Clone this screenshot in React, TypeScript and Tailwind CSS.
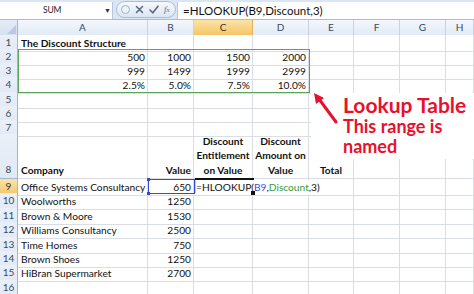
import React from "react";

const FONT = { fontFamily: "Lato, 'Open Sans', sans-serif" };

type Row = {
  n: number;
  h: string;
  end?: boolean;
  cells: (React.ReactNode | null)[];
};

const R = ({ children }: { children: React.ReactNode }) => (
  <div className="w-full text-right pr-[2px]">{children}</div>
);
const L = ({ children }: { children: React.ReactNode }) => (
  <div className="w-full pl-[3px] whitespace-nowrap">{children}</div>
);
const C = ({ children }: { children: React.ReactNode }) => (
  <div className="w-full text-center font-bold leading-[14.5px]">{children}</div>
);

const ROWS: Row[] = [
  { n: 1, h: "h-[14px]", cells: [<L><b>The Discount Structure</b></L>] },
  { n: 2, h: "h-[14px]", cells: [<R>500</R>, <R>1000</R>, <R>1500</R>, <R>2000</R>] },
  { n: 3, h: "h-[14px]", cells: [<R>999</R>, <R>1499</R>, <R>1999</R>, <R>2999</R>] },
  { n: 4, h: "h-[15px]", cells: [<R>2.5%</R>, <R>5.0%</R>, <R>7.5%</R>, <R>10.0%</R>] },
  { n: 5, h: "h-[14px]", cells: [] },
  { n: 6, h: "h-[14px]", cells: [] },
  { n: 7, h: "h-[14px]", cells: [] },
  {
    n: 8,
    h: "h-[45px]",
    end: true,
    cells: [
      <L><b>Company</b></L>,
      <R><b>Value</b></R>,
      <C>Discount<br />Entitlement<br />on Value</C>,
      <C>Discount<br />Amount on<br />Value</C>,
      <C>Total</C>,
    ],
  },
  {
    n: 9,
    h: "h-[14px]",
    cells: [
      <L>Office Systems Consultancy</L>,
      <R>650</R>,
      <div className="pl-[2px] whitespace-nowrap relative z-10 bg-white">
        =HLOOKUP(<span className="text-[#3b4fd8]">B9</span>,<span className="text-[#3c9a3c]">Discount</span>,3)
      </div>,
    ],
  },
  { n: 10, h: "h-[15px]", cells: [<L>Woolworths</L>, <R>1250</R>] },
  { n: 11, h: "h-[14px]", cells: [<L>Brown &amp; Moore</L>, <R>1530</R>] },
  { n: 12, h: "h-[15px]", cells: [<L>Williams Consultancy</L>, <R>2500</R>] },
  { n: 13, h: "h-[14px]", cells: [<L>Time Homes</L>, <R>750</R>] },
  { n: 14, h: "h-[14px]", cells: [<L>Brown Shoes</L>, <R>1250</R>] },
  { n: 15, h: "h-[15px]", cells: [<L>HiBran Supermarket</L>, <R>2700</R>] },
  { n: 16, h: "h-[14px]", cells: [] },
];

const COLS = ["A", "B", "C", "D", "E", "F", "G", "H"];
const GRID = "grid grid-cols-[18px_130px_46px_59px_56px_45px_46px_46px_28px]";

function FormulaBar() {
  return (
    <div className="h-[20px] flex items-stretch bg-[#dbe6f4] border-b border-[#a9bcd6]" style={FONT}>
      <div className="w-[113px] bg-white border-r border-[#b7c6da] flex items-center relative mt-[2px]">
        <span className="absolute left-[43px] text-[8.5px] text-[#222] tracking-tight">SUM</span>
        <span className="absolute left-[104px] text-[7px] text-[#333]">▼</span>
      </div>
      <div className="w-[64px] flex items-center pl-[3px]">
        <div className="h-[17px] w-[60px] rounded-full border border-[#a9bdd8] bg-gradient-to-b from-[#f6f9fd] to-[#dce6f3] flex items-center gap-[5px] pl-[4px]">
          <span className="w-[9px] h-[9px] rounded-full border border-[#9fb2cc] bg-[#eef3f9]" />
          <svg width="9" height="9" viewBox="0 0 9 9">
            <path d="M1.5 1.5 L7.5 7.5 M7.5 1.5 L1.5 7.5" stroke="#5b6b82" strokeWidth="1.6" strokeLinecap="round" />
          </svg>
          <svg width="10" height="9" viewBox="0 0 10 9">
            <path d="M1 5 L3.8 7.8 L9 1.2" stroke="#5b6b82" strokeWidth="1.6" fill="none" strokeLinecap="round" />
          </svg>
          <span className="text-[9px] italic text-[#5b6b82]" style={{ fontFamily: "'Liberation Serif', serif" }}>
            f<span className="text-[7px]">x</span>
          </span>
        </div>
      </div>
      <div className="flex-1 bg-white border-l border-[#b7c6da] flex items-center pl-[5px] mt-[2px] text-[11.5px] text-[#111]">
        =HLOOKUP(B9,Discount,3)
      </div>
    </div>
  );
}

export default function App() {
  return (
    <div className="w-[474px] h-[294px] overflow-hidden bg-white text-[10.2px] text-[#111]" style={FONT}>
      <FormulaBar />
      <div className="relative">
        {/* column headers */}
        <div className={`${GRID} h-[15px] border-b border-[#9eb6ce]`}>
          <div className="bg-gradient-to-b from-[#e4ecf7] to-[#d5e1f2] border-r border-[#9eb6ce] relative">
            <svg className="absolute right-[1px] bottom-[1px]" width="9" height="9" viewBox="0 0 9 9">
              <path d="M9 0 L9 9 L0 9 Z" fill="#b8c9e1" />
            </svg>
          </div>
          {COLS.map((c) => (
            <div
              key={c}
              className={`flex items-center justify-center border-r text-[10px] ${
                c === "C"
                  ? "bg-gradient-to-b from-[#fbe3a8] to-[#f5c565] border-[#e2b35a] text-[#333]"
                  : "bg-gradient-to-b from-[#f4f7fc] to-[#e2eaf6] border-[#c6d3e6] text-[#3a4a5e]"
              }`}
            >
              {c}
            </div>
          ))}
        </div>
        {/* rows */}
        {ROWS.map((r) => (
          <div key={r.n} className={`${GRID} ${r.h}`}>
            <div
              className={`flex items-end justify-center pb-[1px] border-r border-b text-[10px] ${
                r.n === 9
                  ? "bg-gradient-to-b from-[#fbe3a8] to-[#f5c565] border-[#e2b35a] text-[#333]"
                  : "bg-gradient-to-b from-[#eaf0f9] to-[#e1e9f5] border-[#9eb6ce] text-[#3a4a5e]"
              }`}
            >
              {r.n}
            </div>
            {COLS.map((c, i) => (
              <div
                key={c}
                className={`flex border-r border-b border-[#dadde4] leading-[13px] ${r.end ? "items-end pb-[1px]" : "items-center"} ${
                  r.n === 9 && i === 2 ? "overflow-visible" : "overflow-hidden"
                }`}
              >
                {r.cells[i] ?? null}
              </div>
            ))}
          </div>
        ))}

        {/* named range outline A2:D4 */}
        <div className="absolute left-[18px] top-[29px] w-[292px] h-[44px] border-[1.5px] border-[#5aa55a] pointer-events-none" />

        {/* B9 reference outline */}
        <div className="absolute left-[148px] top-[159px] w-[47px] h-[15px] border border-[#3349d6] pointer-events-none z-20">
          <span className="absolute -left-[2px] -top-[2px] w-[3px] h-[3px] bg-[#3349d6]" />
          <span className="absolute -left-[2px] -bottom-[2px] w-[3px] h-[3px] bg-[#3349d6]" />
        </div>

        {/* active cell C9 */}
        <div className="absolute left-[195px] top-[158px] w-[59px] h-[2px] bg-[#111] z-20" />
        <div className="absolute left-[195px] top-[160px] w-[1px] h-[13px] bg-[#e8d64a] z-20" />
        <div className="absolute left-[251px] top-[171px] w-[4px] h-[4px] bg-[#111] z-20" />

        {/* annotation */}
        <div className="absolute left-[311px] top-[73px] w-[163px] h-[66px] bg-white z-30">
          <svg className="absolute left-0 top-0" width="30" height="34" viewBox="0 0 30 34">
            <path d="M25 29 L8 6" stroke="#e8112d" strokeWidth="3" strokeLinecap="round" />
            <path d="M3 0 L13 5 L5 11 Z" fill="#e8112d" />
          </svg>
          <div className="absolute left-[32px] top-[1px] text-[#e8112d] font-bold leading-[22px] whitespace-nowrap">
            <div className="text-[21px]">Lookup Table</div>
            <div className="text-[18px] leading-[20px]">This range is</div>
            <div className="text-[18px] leading-[20px]">named</div>
          </div>
        </div>
      </div>
    </div>
  );
}
